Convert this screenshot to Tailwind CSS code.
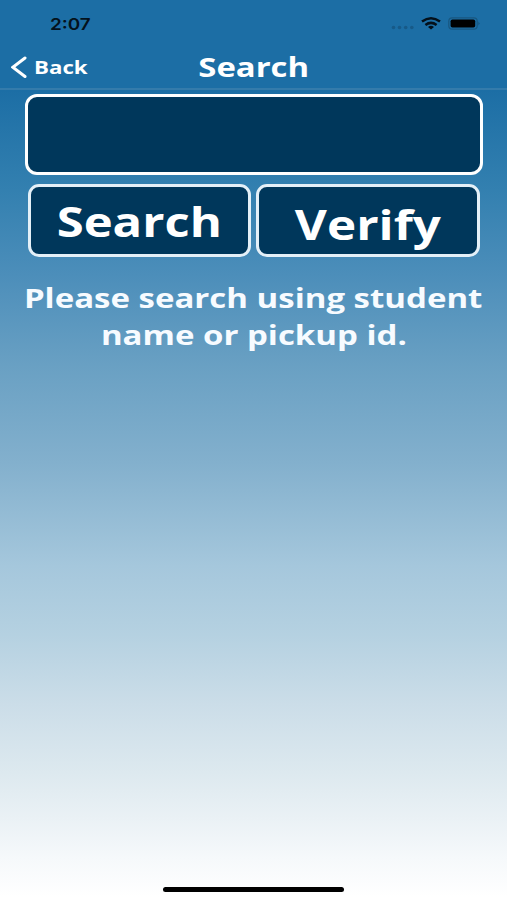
<!DOCTYPE html>
<html lang="en">
<head>
<meta charset="utf-8">
<title>Search</title>
<script src="https://cdn.jsdelivr.net/npm/@tailwindcss/browser@4"></script>
</head>
<body class="w-[507px] h-[900px] overflow-hidden font-['Open_Sans',sans-serif] font-bold text-white">
<main class="w-full h-full flex flex-col bg-[linear-gradient(to_bottom,#1c6ea5_0px,#1c6ea5_90px,#3380b0_190px,#4c8eba_275px,#69a0c3_365px,#83b0cd_463px,#a5c7dc_566px,#b5d1e1_635px,#cbdde8_704px,#dde9ef_773px,#eaf1f5_818px,#f6f9fb_859px,#ffffff_897px)]">
  <div class="h-[47px] shrink-0 flex justify-between pl-[50px] pr-[26px]">
    <span class="font-['Inter',sans-serif] font-semibold text-[16px] leading-[48px] text-[#04121c] origin-left scale-x-[1.18]">2:07</span>
    <svg class="w-[90px] h-[47px]" viewBox="391 0 90 47">
      <g fill="#175a88"><circle cx="393.5" cy="27.5" r="1.8"/><circle cx="399.5" cy="27.5" r="1.8"/><circle cx="405.7" cy="27.5" r="1.8"/><circle cx="411.8" cy="27.5" r="1.8"/></g>
      <g fill="none" stroke="#04101a" stroke-width="2.5"><path d="M422 21.6Q431 14.8 440 21.6"/><path d="M425.4 25Q431 20.8 436.6 25"/></g>
      <path fill="#04101a" d="M428 26.9Q431 24.8 434 26.9L431 29.5Z"/>
      <rect x="448.8" y="17.8" width="28.4" height="11.4" rx="3.4" fill="none" stroke="#185780" stroke-width="1.2"/>
      <rect x="450.6" y="19.4" width="24.6" height="8.2" rx="1.8" fill="#000"/>
      <path d="M478.6 21.6q1.8 1.9 0 3.8z" fill="#124766"/>
    </svg>
  </div>
  <header class="h-[43px] shrink-0 grid grid-cols-[1fr_auto_1fr] border-b-2 border-[#347bab]">
    <div class="flex pl-[11px]">
      <svg class="w-[16px] h-[41px]" viewBox="11 47 16 41"><path d="M25 58L12.8 67.2L25 76.5" fill="none" stroke="#fff" stroke-width="3" stroke-linecap="round" stroke-linejoin="miter"/></svg>
      <span class="ml-[6.5px] text-[17px] leading-[41px] origin-left scale-x-[1.31]">Back</span>
    </div>
    <h1 class="text-[26.5px] leading-[41px] scale-x-[1.24]">Search</h1>
    <div></div>
  </header>
  <div class="mt-1 ml-[25px] w-[458px] h-[81px] shrink-0 rounded-[12px] border-[3px] border-white bg-[#00375b]"></div>
  <div class="mt-[9px] ml-[27.5px] flex gap-[5px] h-[72.5px] shrink-0">
    <div class="w-[223.5px] rounded-[11px] border-[3px] border-[#e4f0f8] bg-[#00375b] flex justify-center"><span class="text-[40.5px] leading-[70px] scale-x-[1.21]">Search</span></div>
    <div class="w-[224px] rounded-[11px] border-[3px] border-[#e4f0f8] bg-[#00375b] flex justify-center"><span class="text-[40.5px] leading-[75px] scale-x-[1.22]">Verify</span></div>
  </div>
  <p class="mt-[23.5px] flex flex-col items-center text-[26.5px] leading-[37px] whitespace-nowrap text-[#f7fbff]">
    <span class="scale-x-[1.245]">Please search using student</span>
    <span class="scale-x-[1.245]">name or pickup id.</span>
  </p>
  <div class="mt-auto mb-[8px] self-center w-[181px] h-[5px] rounded-full bg-black"></div>
</main>
</body>
</html>
